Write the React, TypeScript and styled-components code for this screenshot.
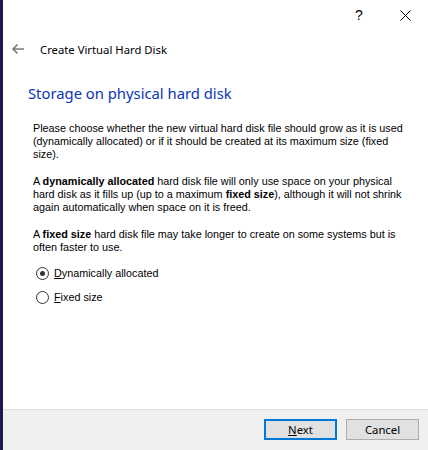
import React from 'react';
import styled, { createGlobalStyle } from 'styled-components';

const GlobalStyle = createGlobalStyle`
  html, body {
    margin: 0;
    padding: 0;
    background: #ffffff;
  }
`;

const Window = styled.div`
  display: flex;
  width: 428px;
  height: 450px;
  overflow: hidden;
`;

const EdgeStrip = styled.div`
  width: 3px;
  flex-shrink: 0;
  background-color: #1a1a4c;
`;

const Main = styled.div`
  flex: 1;
  min-width: 0;
  display: flex;
  flex-direction: column;
  background: #ffffff;
`;

const TitleBar = styled.div`
  height: 30px;
  display: flex;
  justify-content: flex-end;
  align-items: center;
`;

const TitleButton = styled.div`
  width: 46px;
  height: 30px;
  display: flex;
  align-items: center;
  justify-content: center;
  font-family: 'Liberation Sans', sans-serif;
  font-size: 14px;
  color: #000;
`;

const Header = styled.div`
  display: flex;
  align-items: center;
  height: 24px;
  margin-top: 7px;
  padding-left: 7px;
`;

const BackButton = styled.div`
  width: 16px;
  height: 16px;
  display: flex;
  align-items: center;
  justify-content: center;
  margin-right: 14px;
`;

const HeaderTitle = styled.div`
  font-family: 'Noto Sans', sans-serif;
  font-size: 11.3px;
  color: #000;
`;

const Content = styled.div`
  flex: 1;
  display: flex;
  flex-direction: column;
  padding: 0 24px 0 25px;
`;

const PageTitle = styled.h1`
  margin: 21px 0 0 0;
  font-family: 'Noto Sans', sans-serif;
  font-weight: 400;
  font-size: 14.8px;
  line-height: 22px;
  color: #0b34b6;
`;

const Body = styled.div`
  margin-top: 18px;
  padding-left: 5px;
  display: flex;
  flex-direction: column;
  gap: 14px;
`;

const Para = styled.p`
  margin: 0;
  font-family: 'Liberation Sans', sans-serif;
  font-size: 10.8px;
  line-height: 13px;
  color: #000;
  white-space: nowrap;
`;

const RadioGroup = styled.div`
  display: flex;
  flex-direction: column;
  gap: 10px;
  margin-top: -2px;
  padding-left: 3px;
`;

const RadioRow = styled.label`
  display: flex;
  align-items: center;
  gap: 5px;
  font-family: 'Liberation Sans', sans-serif;
  font-size: 10.8px;
  color: #000;
  height: 14px;
`;

const RadioCircle = styled.span<{ $checked?: boolean }>`
  width: 11px;
  height: 11px;
  border: 1px solid #333333;
  border-radius: 50%;
  background: #ffffff;
  display: flex;
  align-items: center;
  justify-content: center;

  &::after {
    content: '';
    width: 5px;
    height: 5px;
    border-radius: 50%;
    background: #333333;
    display: ${p => (p.$checked ? 'block' : 'none')};
  }
`;

const Footer = styled.div`
  height: 41px;
  box-sizing: border-box;
  border-top: 1px solid #dfdfdf;
  background: #f0f0f0;
  display: flex;
  justify-content: flex-end;
  align-items: flex-start;
  gap: 9px;
  padding: 9px 9px 0 0;
`;

const Button = styled.button<{ $primary?: boolean }>`
  width: 73px;
  height: 21px;
  box-sizing: border-box;
  background: #e1e1e1;
  border: ${p => (p.$primary ? '2px solid #0078d7' : '1px solid #adadad')};
  font-family: 'Noto Sans', sans-serif;
  font-size: 11.3px;
  color: #000;
  padding: 0;
  display: flex;
  align-items: center;
  justify-content: center;
`;

const Mnemonic = styled.span`
  text-decoration: underline;
`;

const App: React.FC = () => {
  return (
    <Window>
      <GlobalStyle />
      <EdgeStrip />
      <Main>
        <TitleBar>
          <TitleButton>?</TitleButton>
          <TitleButton>
            <svg width="11" height="11" viewBox="0 0 11 11">
              <path d="M0.5 0.5 L10.5 10.5 M10.5 0.5 L0.5 10.5" stroke="#000" strokeWidth="1" />
            </svg>
          </TitleButton>
        </TitleBar>
        <Header>
          <BackButton>
            <svg width="14" height="12" viewBox="0 0 14 12">
              <path d="M13 6 H2 M6.5 1.5 L2 6 L6.5 10.5" stroke="#7a7a7a" strokeWidth="1.6" fill="none" />
            </svg>
          </BackButton>
          <HeaderTitle>Create Virtual Hard Disk</HeaderTitle>
        </Header>
        <Content>
          <PageTitle>Storage on physical hard disk</PageTitle>
          <Body>
            <Para>
              Please choose whether the new virtual hard disk file should grow as it is used
              <br />
              (dynamically allocated) or if it should be created at its maximum size (fixed
              <br />
              size).
            </Para>
            <Para>
              A <b>dynamically allocated</b> hard disk file will only use space on your physical
              <br />
              hard disk as it fills up (up to a maximum <b>fixed size</b>), although it will not shrink
              <br />
              again automatically when space on it is freed.
            </Para>
            <Para>
              A <b>fixed size</b> hard disk file may take longer to create on some systems but is
              <br />
              often faster to use.
            </Para>
            <RadioGroup>
              <RadioRow>
                <RadioCircle $checked />
                <span><Mnemonic>D</Mnemonic>ynamically allocated</span>
              </RadioRow>
              <RadioRow>
                <RadioCircle />
                <span><Mnemonic>F</Mnemonic>ixed size</span>
              </RadioRow>
            </RadioGroup>
          </Body>
        </Content>
        <Footer>
          <Button $primary><span><Mnemonic>N</Mnemonic>ext</span></Button>
          <Button>Cancel</Button>
        </Footer>
      </Main>
    </Window>
  );
};

export default App;
